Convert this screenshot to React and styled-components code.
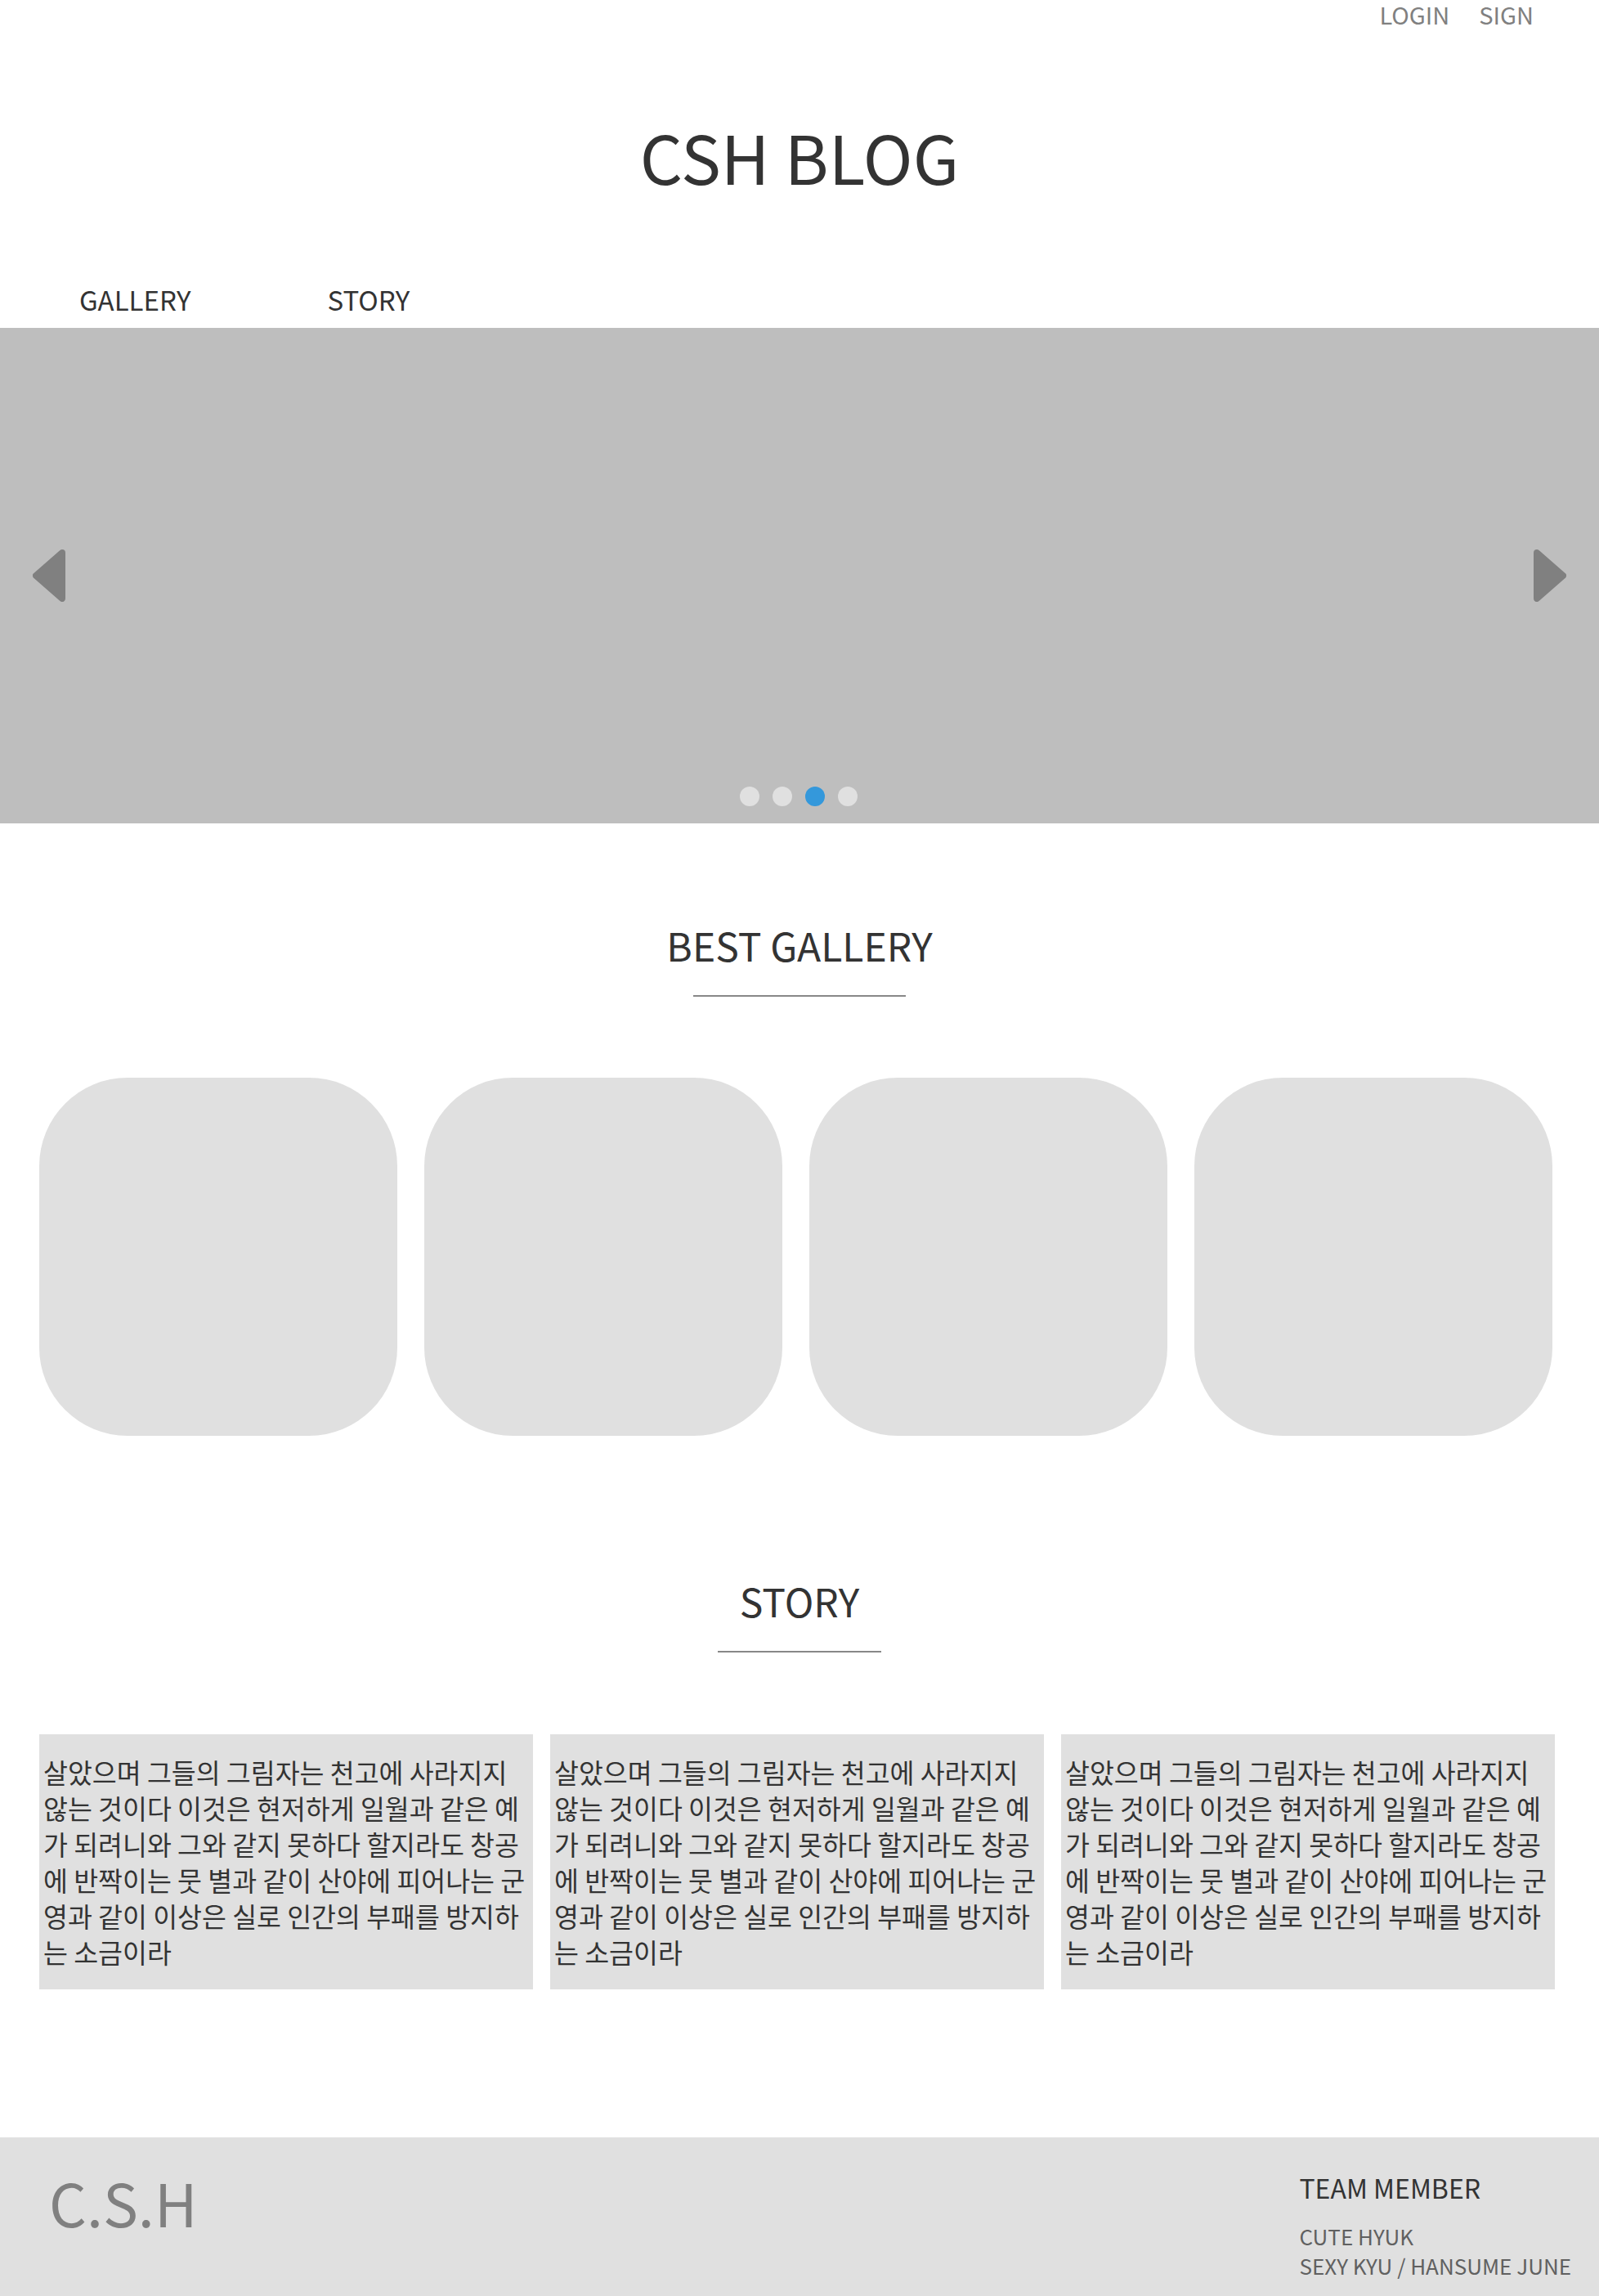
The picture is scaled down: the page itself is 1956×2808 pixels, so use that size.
import React from 'react'
import styled, { createGlobalStyle } from "styled-components";

const GlobalStyle = createGlobalStyle`
    body {
        margin: 0;
        background: #ffffff;
        font-family: "Noto Sans CJK KR", "Noto Sans", sans-serif;
    }
`;

const Page = styled.div`
    width: 1956px;
    display: flex;
    flex-direction: column;
`;

const TopBar = styled.div`
    height: 34px;
    display: flex;
    justify-content: flex-end;
    gap: 36px;
    padding-right: 80px;
`;

const TopLink = styled.a`
    font-size: 29px;
    line-height: 34px;
    color: #808080;
    text-decoration: none;
    cursor: pointer;
`;

const Title = styled.h1`
    margin: 97px 0 0;
    font-size: 82px;
    font-weight: 400;
    line-height: 120px;
    color: #333;
    text-align: center;
`;

const Nav = styled.nav`
    display: flex;
    gap: 167px;
    padding: 90px 0 10px 97px;
`;

const NavItem = styled.a`
    font-size: 33px;
    line-height: 50px;
    color: #333;
    cursor: pointer;
`;

const Slider = styled.div`
    height: 606px;
    background-color: #bebebe;
    position: relative;
`;

const Arrow = styled.div`
    position: absolute;
    top: 0;
    bottom: 0;
    margin: auto;
    width: 40px;
    height: 64px;
    left: ${props => props.direction === "left" ? "40px" : "auto"};
    right: ${props => props.direction === "right" ? "40px" : "auto"};
    cursor: pointer;
`;

const Dots = styled.div`
    position: absolute;
    left: 0;
    right: 0;
    bottom: 21px;
    display: flex;
    justify-content: center;
    gap: 16px;
    padding-right: 3px;
`;

const Dot = styled.span`
    width: 24px;
    height: 24px;
    border-radius: 50%;
    background-color: ${props => props.active ? "#3498db" : "#e0e0e0"};
`;

const SectionTitle = styled.h2`
    margin: ${props => props.top}px 0 0;
    font-size: 48px;
    font-weight: 400;
    line-height: 70px;
    color: #333;
    text-align: center;
`;

const Underline = styled.div`
    width: ${props => props.width}px;
    height: 2px;
    margin: 27px auto 0;
    background-color: #888;
`;

const CardGrid = styled.div`
    display: grid;
    grid-template-columns: repeat(4, 438px);
    column-gap: 33px;
    padding-left: 48px;
    margin-top: 99px;
`;

const Card = styled.div`
    height: 438px;
    border-radius: 108px;
    background-color: #e0e0e0;
`;

const StoryGrid = styled.div`
    display: grid;
    grid-template-columns: repeat(3, 604px);
    column-gap: 21px;
    padding-left: 48px;
    margin-top: 100px;
`;

const StoryBox = styled.p`
    margin: 0;
    padding: 24px 5px;
    background-color: #e0e0e0;
    font-size: 32.5px;
    line-height: 44px;
    color: #333;
`;

const Footer = styled.footer`
    margin-top: 181px;
    height: 194px;
    box-sizing: border-box;
    background-color: #e0e0e0;
    display: flex;
    align-items: flex-start;
    padding: 0 34px 0 60px;
`;

const FooterLogo = styled.div`
    margin-top: 29px;
    font-size: 72px;
    line-height: 100px;
    color: #808080;
`;

const Team = styled.div`
    margin-left: auto;
    padding-top: 41px;
    display: flex;
    flex-direction: column;
`;

const TeamTitle = styled.div`
    font-size: 32px;
    line-height: 40px;
    color: #333;
    margin-bottom: 22px;
`;

const Member = styled.div`
    font-size: 26px;
    line-height: 36px;
    color: #606060;
`;

const story = "살았으며 그들의 그림자는 천고에 사라지지 않는 것이다 이것은 현저하게 일월과 같은 예가 되려니와 그와 같지 못하다 할지라도 창공에 반짝이는 뭇 별과 같이 산야에 피어나는 군영과 같이 이상은 실로 인간의 부패를 방지하는 소금이라";

function ArrowIcon({ direction }) {
    const points = direction === "left" ? "36,4 4,32 36,60" : "4,4 36,32 4,60";
    return (
        <svg width="40" height="64" viewBox="0 0 40 64">
            <polygon points={points} fill="#808080" stroke="#808080" strokeWidth="8" strokeLinejoin="round" />
        </svg>
    );
}

function App() {
    return (
        <Page>
            <GlobalStyle />
            <TopBar>
                <TopLink>LOGIN</TopLink>
                <TopLink>SIGN</TopLink>
            </TopBar>
            <Title>CSH BLOG</Title>
            <Nav>
                <NavItem>GALLERY</NavItem>
                <NavItem>STORY</NavItem>
            </Nav>
            <Slider>
                <Arrow direction="left"><ArrowIcon direction="left" /></Arrow>
                <Arrow direction="right"><ArrowIcon direction="right" /></Arrow>
                <Dots>
                    {[0, 1, 2, 3].map(i => <Dot key={i} active={i === 2} />)}
                </Dots>
            </Slider>

            <SectionTitle top={113}>BEST GALLERY</SectionTitle>
            <Underline width={260} />
            <CardGrid>
                {[0, 1, 2, 3].map(i => <Card key={i} />)}
            </CardGrid>

            <SectionTitle top={166}>STORY</SectionTitle>
            <Underline width={200} />
            <StoryGrid>
                {[0, 1, 2].map(i => <StoryBox key={i}>{story}</StoryBox>)}
            </StoryGrid>

            <Footer>
                <FooterLogo>C.S.H</FooterLogo>
                <Team>
                    <TeamTitle>TEAM MEMBER</TeamTitle>
                    <Member>CUTE HYUK</Member>
                    <Member>SEXY KYU / HANSUME JUNE</Member>
                </Team>
            </Footer>
        </Page>
    )
}

export default App
